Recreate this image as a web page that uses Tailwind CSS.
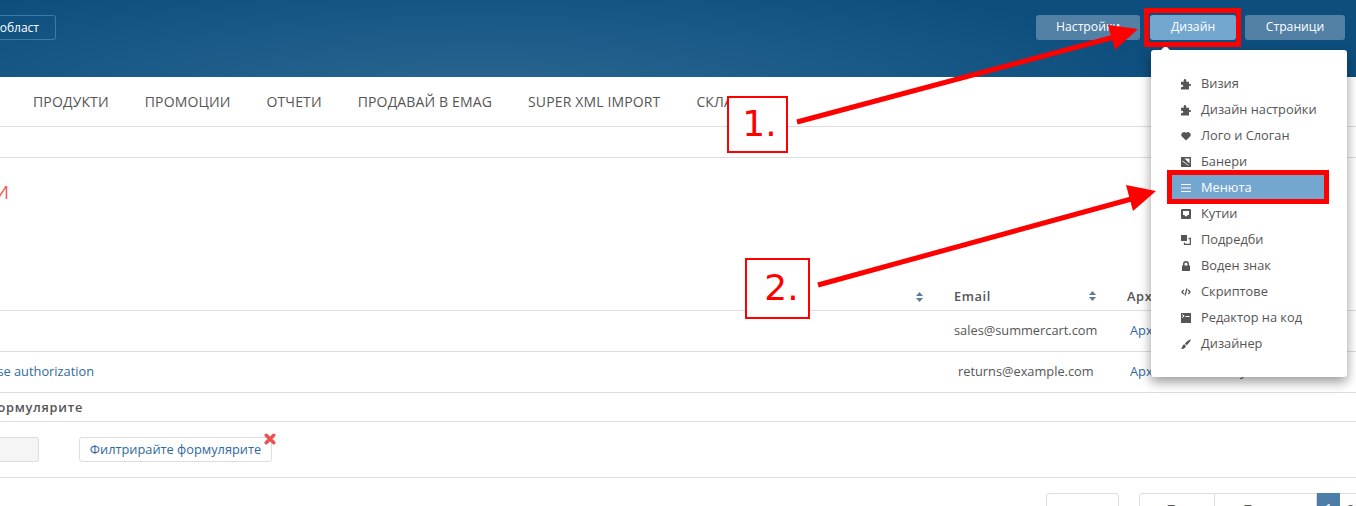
<!doctype html>
<html>
<head>
<meta charset="utf-8">
<script src="https://cdn.jsdelivr.net/npm/@tailwindcss/browser@4"></script>
</head>
<body class="m-0 bg-white">
<div class="relative w-[1356px] h-[506px] overflow-hidden bg-white font-['Open_Sans',sans-serif] text-[12.8px] text-[#555]">

  <!-- header -->
  <header class="h-[77px] flex items-start justify-between pt-[15px] bg-[radial-gradient(ellipse_700px_120px_at_480px_90px,#2a6690_0%,#1a5a88_55%,#0d4e7e_100%)]">
    <div class="w-[56px] h-[25px] flex justify-end items-center pr-[16px] border border-[#3f7aa5] border-l-0 rounded-r-[3px] text-[12px] text-white whitespace-nowrap">област</div>
    <div class="flex pr-[11px] text-[12.2px] text-white">
      <div class="w-[104px] h-[25px] rounded-[3px] bg-[#5380a5] flex items-center justify-center">Настройки</div>
      <div class="ml-[10px] w-[86px] h-[25px] rounded-[3px] bg-[#74a7cf] flex items-center justify-center">Дизайн</div>
      <div class="ml-[9px] w-[100px] h-[25px] rounded-[3px] bg-[#5380a5] flex items-center justify-center">Страници</div>
    </div>
  </header>

  <!-- nav -->
  <nav class="h-[50px] border-b border-[#ddd] flex items-center gap-[36px] pl-[33px] pb-[1px] text-[14px] tracking-[0.14px] text-[#555] whitespace-nowrap">
    <span>ПРОДУКТИ</span><span>ПРОМОЦИИ</span><span>ОТЧЕТИ</span><span>ПРОДАВАЙ В EMAG</span><span>SUPER XML IMPORT</span><span>СКЛАДОВЕ</span>
  </nav>
  <div class="h-[31px] border-b border-[#ddd]"></div>

  <!-- title -->
  <div class="h-[80px] pt-[22px]">
    <div class="w-[9px] flex justify-end whitespace-nowrap text-[18px] leading-[24px] text-[#f4544f]">И</div>
  </div>

  <!-- table head -->
  <div class="h-[73px] flex items-end border-b border-[#ddd] pb-[4px] font-semibold tracking-[0.6px] text-[#555]">
    <div class="w-[923px] flex justify-end pb-[4px]">
      <svg class="w-[7px] h-[10px]" viewBox="0 0 7 10"><path fill="#5c7aa0" d="M3.500 0 7 4H0zM0 6h7l-3.500 4z"/></svg>
    </div>
    <div class="ml-[31px] w-[142px] flex items-center justify-between">
      <span class="leading-[20px]">Email</span>
      <svg class="w-[7px] h-[10px]" viewBox="0 0 7 10"><path fill="#5c7aa0" d="M3.500 0 7 4H0zM0 6h7l-3.500 4z"/></svg>
    </div>
    <div class="ml-[31px] whitespace-nowrap leading-[20px]">Архив</div>
  </div>

  <!-- rows -->
  <div class="h-[41px] flex items-center border-b border-[#ddd]">
    <div class="ml-[954px] w-[143px] whitespace-nowrap">sales@summercart.com</div>
    <div class="ml-[33px] text-[#2f6a9c]">Архив</div>
  </div>
  <div class="h-[41px] flex items-center border-b border-[#ddd]">
    <div class="w-[94px] flex justify-end whitespace-nowrap text-[#2f6a9c]">Return merchandise authorization</div>
    <div class="ml-[864px] w-[136px] whitespace-nowrap">returns@example.com</div>
    <div class="ml-[36px] whitespace-nowrap text-[#2f6a9c]">Архив<span class="ml-[72px] text-[#555]">у</span></div>
  </div>
  <div class="h-[29px] flex items-center border-b border-[#ddd] pt-[1px]">
    <div class="w-[83px] flex justify-end whitespace-nowrap font-semibold tracking-[0.7px]">Формулярите</div>
  </div>

  <!-- filters -->
  <div class="h-[56px] flex items-center border-b border-[#ddd] pb-[1px]">
    <div class="w-[39px] h-[25px] bg-[#f5f5f5] border border-[#ddd] border-l-0 rounded-r-[3px]"></div>
    <div class="relative ml-[40px] w-[193px] h-[25px] flex items-center justify-center pt-[2px] border border-[#ddd] rounded-[3px] text-[#2f6a9c] whitespace-nowrap">
      Филтрирайте формулярите
      <svg class="absolute right-[-5px] top-[-5px] w-[12px] h-[12px]" viewBox="0 0 12 12"><path stroke="#f05050" stroke-width="3.400" stroke-linecap="round" d="M2.200 2.200l7.600 7.600M9.800 2.200l-7.600 7.600"/></svg>
    </div>
  </div>

  <!-- pagination -->
  <div class="flex pt-[15px] pl-[1046px] text-[#555]">
    <div class="w-[73px] h-[40px] border border-[#ddd] rounded-t-[3px]"></div>
    <div class="ml-[20px] w-[77px] h-[40px] border border-[#ddd] rounded-tl-[3px] pl-[12px] pt-[7px] leading-[16px] flex gap-[11px] whitespace-nowrap"><span>‹</span><span>Първа</span></div>
    <div class="w-[102px] h-[40px] border border-l-0 border-[#ddd] pl-[13px] pt-[7px] leading-[16px] flex gap-[11px] whitespace-nowrap"><span>‹</span><span>Предишна</span></div>
    <div class="w-[23px] h-[40px] bg-[#4d7ea8] text-white text-center pt-[7px] leading-[16px]">1</div>
    <div class="w-[16px] h-[40px] border-t border-[#ddd] pl-[7px] pt-[7px] leading-[16px]">2</div>
  </div>

  <!-- dropdown menu -->
  <div class="absolute left-[1151px] top-[50px] w-[196px] h-[327px] pt-[21px] bg-white rounded-[3px] shadow-[0_5px_12px_rgba(0,0,0,0.4)] text-[#555]">
    <div class="absolute left-[11px] top-[-3px] w-[7px] h-[7px] rotate-45 bg-white"></div>
    <div class="flex flex-col">
      <div class="h-[26px] flex items-center pl-[30px] gap-[10px]"><svg class="w-[10px] h-[11px] fill-[#555]" viewBox="0 0 10 11"><path d="M2.800 2.800C2.300 1 3 0 4 0s1.700 1 1.200 2.800H8V5.200C9.500 4.800 10 5.200 10 6S9.500 7.200 8 6.800V10.500H0V8C1.500 8.400 2.200 7.800 2.200 7S1.500 5.600 0 6V2.800z"/></svg><span>Визия</span></div>
      <div class="h-[26px] flex items-center pl-[30px] gap-[10px]"><svg class="w-[10px] h-[11px] fill-[#555]" viewBox="0 0 10 11"><path d="M2.800 2.800C2.300 1 3 0 4 0s1.700 1 1.200 2.800H8V5.200C9.500 4.800 10 5.200 10 6S9.500 7.200 8 6.800V10.500H0V8C1.500 8.400 2.200 7.800 2.200 7S1.500 5.600 0 6V2.800z"/></svg><span>Дизайн настройки</span></div>
      <div class="h-[26px] flex items-center pl-[30px] gap-[10px]"><svg class="w-[10px] h-[10px] fill-[#555]" viewBox="0 0 10 10"><path d="M5 9.500.7 5.200C-1 2.900 2.700-.6 5 1.900 7.300-.6 11 2.900 9.300 5.200z"/></svg><span>Лого и Слоган</span></div>
      <div class="h-[26px] flex items-center pl-[30px] gap-[10px]"><svg class="w-[10px] h-[10px]" viewBox="0 0 10 10"><path fill="#555" fill-rule="evenodd" d="M0 0h10v10H0zM3.500 1.500 8.500 6.500V1.500zM1.500 3.500V4.500L7 8.500H8z"/></svg><span>Банери</span></div>
      <div class="ml-[20px] w-[154px] h-[26px] flex items-center pl-[10px] gap-[10px] bg-[#74a7cf] text-white"><svg class="w-[10px] h-[10px]" viewBox="0 0 10 10"><path stroke="#fff" stroke-width="1" d="M0 1.500h10M0 5h10M0 8.500h10"/></svg><span>Менюта</span></div>
      <div class="h-[26px] flex items-center pl-[30px] gap-[10px]"><svg class="w-[10px] h-[10px]" viewBox="0 0 10 10"><path fill="#555" fill-rule="evenodd" d="M1 0h8a1 1 0 0 1 1 1v8a1 1 0 0 1-1 1H1a1 1 0 0 1-1-1V1a1 1 0 0 1 1-1zM2 2V6H3.500L4 7.200H6L6.500 6H8V2z"/></svg><span>Кутии</span></div>
      <div class="h-[26px] flex items-center pl-[30px] gap-[10px]"><svg class="w-[10px] h-[10px]" viewBox="0 0 10 10"><path fill="#555" d="M0 0h6v6H0z"/><path fill="none" stroke="#555" stroke-width="1.300" d="M7.500 3.500h1.900v5.900h-5.900V7.500"/></svg><span>Подредби</span></div>
      <div class="h-[26px] flex items-center pl-[30px] gap-[10px]"><svg class="w-[10px] h-[10px]" viewBox="0 0 10 10"><path fill="#555" fill-rule="evenodd" d="M1 4.500h1V3a3 3 0 0 1 6 0v1.500h1V10H1zM3.500 4.500h3V3a1.500 1.500 0 0 0-3 0z"/></svg><span>Воден знак</span></div>
      <div class="h-[26px] flex items-center pl-[30px] gap-[10px]"><svg class="w-[10px] h-[10px]" viewBox="0 0 10 10"><path fill="none" stroke="#555" stroke-width="1.300" d="M2.800 2.800.9 5l1.900 2.200M7.200 2.800 9.100 5 7.200 7.200M6 1.500 4 8.500"/></svg><span>Скриптове</span></div>
      <div class="h-[26px] flex items-center pl-[30px] gap-[10px]"><svg class="w-[10px] h-[10px]" viewBox="0 0 10 10"><path fill="#555" d="M0 0h10v10H0z"/><path fill="none" stroke="#fff" stroke-width="1" d="M1.200 1.500 3.200 3 1.200 4.500M4.500 3.500H8.500"/></svg><span>Редактор на код</span></div>
      <div class="h-[26px] flex items-center pl-[30px] gap-[10px]"><svg class="w-[10px] h-[10px] fill-[#555]" viewBox="0 0 10 10"><path d="M10 .2C9.400 2.500 7.500 4.500 5.500 6.200L3.900 4.600C5.500 2.500 7.500.8 10 .2zM3.200 5.200 5 7C4.700 9 2 10.300 0 10 1.200 9.200 1 6 3.200 5.200z"/></svg><span>Дизайнер</span></div>
    </div>
  </div>

  <!-- annotations -->
  <div class="absolute left-[1144px] top-[8px] w-[97px] h-[39px] border-[5px] border-[#ff0000]"></div>
  <div class="absolute left-[1167px] top-[170px] w-[162px] h-[34px] border-[5px] border-[#ff0000]"></div>
  <div class="absolute left-[727px] top-[96px] w-[61px] h-[57px] pl-[4px] pb-[2px] border-2 border-[#ff0000] bg-white flex items-center justify-center font-['DejaVu_Sans',sans-serif] text-[36px] text-[#ff0000]">1.</div>
  <div class="absolute left-[745px] top-[258px] w-[65px] h-[61px] pl-[8px] pb-[1px] border-2 border-[#ff0000] bg-white flex items-center justify-center font-['DejaVu_Sans',sans-serif] text-[36px] text-[#ff0000]">2.</div>
  <svg class="absolute left-0 top-0 w-[1356px] h-[506px] pointer-events-none" viewBox="0 0 1356 506">
    <path stroke="#ff0000" stroke-width="5" d="M797 122 1118 36"/>
    <path fill="#ff0000" d="M1138 29 1108 25 1115 50z"/>
    <path stroke="#ff0000" stroke-width="5" d="M818 285 1135 198"/>
    <path fill="#ff0000" d="M1156 191 1126 185 1133 211z"/>
  </svg>
</div>
</body>
</html>
